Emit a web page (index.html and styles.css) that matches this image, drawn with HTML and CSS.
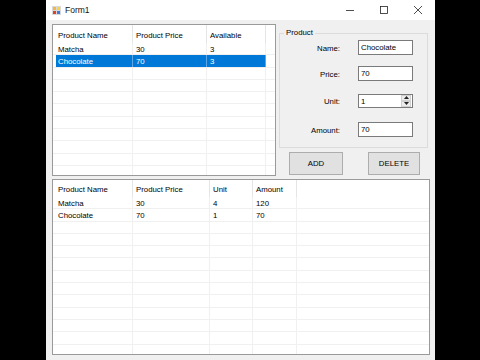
FILE: index.html
```html
<!DOCTYPE html>
<html>
<head>
<meta charset="utf-8">
<link rel="stylesheet" href="styles.css">
</head>
<body>
<div class="window">
  <div class="titlebar">
    <svg class="appicon" width="9" height="9" viewBox="0 0 9 9">
      <rect x="0" y="0" width="9" height="9" fill="#d9d9d9"/>
      <rect x="1" y="1" width="3" height="3" fill="#f4b63f"/>
      <rect x="5" y="1" width="3" height="3" fill="#f6d34a"/>
      <rect x="1" y="5" width="3" height="3" fill="#d9432c"/>
      <rect x="5" y="5" width="3" height="3" fill="#3f7bd8"/>
    </svg>
    <span class="title">Form1</span>
    <div class="controls">
      <div class="ctl"><svg width="10" height="10" viewBox="0 0 10 10"><line x1="1" y1="5.5" x2="9" y2="5.5" stroke="#222" stroke-width="0.8"/></svg></div>
      <div class="ctl"><svg width="10" height="10" viewBox="0 0 10 10"><rect x="1.5" y="1.5" width="7" height="7" fill="none" stroke="#222" stroke-width="0.8"/></svg></div>
      <div class="ctl"><svg width="10" height="10" viewBox="0 0 10 10"><path d="M1 1 L9 9 M9 1 L1 9" stroke="#222" stroke-width="0.8"/></svg></div>
    </div>
  </div>
  <div class="client">
    <div class="toprow">
      <div class="list list-top">
        <div class="row head cols-top">
          <div class="cell first">Product Name</div><div class="cell">Product Price</div><div class="cell">Available</div><div class="cell fill"></div>
        </div>
        <div class="row cols-top">
          <div class="cell first">Matcha</div><div class="cell">30</div><div class="cell">3</div><div class="cell fill"></div>
        </div>
        <div class="row cols-top sel">
          <div class="cell first">Chocolate</div><div class="cell">70</div><div class="cell">3</div><div class="cell fill"></div>
        </div>
        <div class="row cols-top"><div class="cell first"></div><div class="cell"></div><div class="cell"></div><div class="cell fill"></div></div>
        <div class="row cols-top"><div class="cell first"></div><div class="cell"></div><div class="cell"></div><div class="cell fill"></div></div>
        <div class="row cols-top"><div class="cell first"></div><div class="cell"></div><div class="cell"></div><div class="cell fill"></div></div>
        <div class="row cols-top"><div class="cell first"></div><div class="cell"></div><div class="cell"></div><div class="cell fill"></div></div>
        <div class="row cols-top"><div class="cell first"></div><div class="cell"></div><div class="cell"></div><div class="cell fill"></div></div>
        <div class="row cols-top"><div class="cell first"></div><div class="cell"></div><div class="cell"></div><div class="cell fill"></div></div>
        <div class="row cols-top"><div class="cell first"></div><div class="cell"></div><div class="cell"></div><div class="cell fill"></div></div>
        <div class="row cols-top"><div class="cell first"></div><div class="cell"></div><div class="cell"></div><div class="cell fill"></div></div>
        <div class="row cols-top"><div class="cell first"></div><div class="cell"></div><div class="cell"></div><div class="cell fill"></div></div>
      </div>
      <div class="panel">
        <div class="group">
          <span class="legend">Product</span>
          <div class="field">
            <span class="lbl">Name:</span><div class="box">Chocolate</div>
          </div>
          <div class="field f2">
            <span class="lbl">Price:</span><div class="box">70</div>
          </div>
          <div class="field f3">
            <span class="lbl">Unit:</span>
            <div class="box spinbox">1
              <div class="spin">
                <div class="sbtn"><svg width="5" height="3" viewBox="0 0 5 3"><path d="M0 3 L2.5 0 L5 3 Z" fill="#222"/></svg></div>
                <div class="sbtn"><svg width="5" height="3" viewBox="0 0 5 3"><path d="M0 0 L2.5 3 L5 0 Z" fill="#222"/></svg></div>
              </div>
            </div>
          </div>
          <div class="field f4">
            <span class="lbl">Amount:</span><div class="box">70</div>
          </div>
        </div>
        <div class="buttons">
          <div class="btn btn-add">ADD</div>
          <div class="btn btn-del">DELETE</div>
        </div>
      </div>
    </div>
    <div class="list list-bottom">
      <div class="row head cols-bot">
        <div class="cell first">Product Name</div><div class="cell">Product Price</div><div class="cell">Unit</div><div class="cell">Amount</div><div class="cell fill"></div>
      </div>
      <div class="row cols-bot">
        <div class="cell first">Matcha</div><div class="cell">30</div><div class="cell">4</div><div class="cell">120</div><div class="cell fill"></div>
      </div>
      <div class="row cols-bot">
        <div class="cell first">Chocolate</div><div class="cell">70</div><div class="cell">1</div><div class="cell">70</div><div class="cell fill"></div>
      </div>
      <div class="row cols-bot"><div class="cell first"></div><div class="cell"></div><div class="cell"></div><div class="cell"></div><div class="cell fill"></div></div>
      <div class="row cols-bot"><div class="cell first"></div><div class="cell"></div><div class="cell"></div><div class="cell"></div><div class="cell fill"></div></div>
      <div class="row cols-bot"><div class="cell first"></div><div class="cell"></div><div class="cell"></div><div class="cell"></div><div class="cell fill"></div></div>
      <div class="row cols-bot"><div class="cell first"></div><div class="cell"></div><div class="cell"></div><div class="cell"></div><div class="cell fill"></div></div>
      <div class="row cols-bot"><div class="cell first"></div><div class="cell"></div><div class="cell"></div><div class="cell"></div><div class="cell fill"></div></div>
      <div class="row cols-bot"><div class="cell first"></div><div class="cell"></div><div class="cell"></div><div class="cell"></div><div class="cell fill"></div></div>
      <div class="row cols-bot"><div class="cell first"></div><div class="cell"></div><div class="cell"></div><div class="cell"></div><div class="cell fill"></div></div>
      <div class="row cols-bot"><div class="cell first"></div><div class="cell"></div><div class="cell"></div><div class="cell"></div><div class="cell fill"></div></div>
      <div class="row cols-bot"><div class="cell first"></div><div class="cell"></div><div class="cell"></div><div class="cell"></div><div class="cell fill"></div></div>
      <div class="row cols-bot"><div class="cell first"></div><div class="cell"></div><div class="cell"></div><div class="cell"></div><div class="cell fill"></div></div>
      <div class="row cols-bot"><div class="cell first"></div><div class="cell"></div><div class="cell"></div><div class="cell"></div><div class="cell fill"></div></div>
      <div class="row cols-bot"><div class="cell first"></div><div class="cell"></div><div class="cell"></div><div class="cell"></div><div class="cell fill"></div></div>
    </div>
  </div>
</div>
</body>
</html>
```

FILE: styles.css
```css
html, body {
  margin: 0;
  padding: 0;
  background: #000;
  width: 480px;
  height: 360px;
  overflow: hidden;
  font-family: "Liberation Sans", Arial, sans-serif;
  font-size: 7.8px;
  color: #000;
}

.window {
  width: 389px;
  height: 360px;
  margin-left: 46px;
  background: #f0f0f0;
  display: flex;
  flex-direction: column;
}

.titlebar {
  height: 20px;
  background: #fff;
  display: flex;
  align-items: center;
  padding-left: 6px;
  flex-shrink: 0;
}

.appicon {
  display: block;
}

.title {
  margin-left: 4px;
  font-size: 8.5px;
  color: #111;
}

.controls {
  margin-left: auto;
  display: flex;
  height: 20px;
}

.ctl {
  width: 34px;
  height: 20px;
  display: flex;
  align-items: center;
  justify-content: center;
}

.ctl svg {
  display: block;
}

.client {
  flex: 1;
  padding: 4px 0 0 6px;
  display: flex;
  flex-direction: column;
}

.toprow {
  display: flex;
  height: 152px;
  flex-shrink: 0;
}

.list {
  box-sizing: border-box;
  background: #fff;
  border: 1px solid #9a9a9a;
  overflow: hidden;
}

.list-top {
  width: 224px;
  height: 152px;
}

.list-bottom {
  width: 378px;
  height: 176px;
  margin-top: 3px;
}

.row {
  display: grid;
  box-sizing: border-box;
  height: 12.3px;
  line-height: 13.6px;
  border-bottom: 1px solid #f0f0f0;
  white-space: nowrap;
}

.row.head {
  height: 18px;
  line-height: 21px;
  border-bottom: none;
}

.list-bottom .row.head {
  height: 17px;
  line-height: 20px;
}

.cols-top {
  grid-template-columns: 80px 74px 59px 1fr;
}

.cols-bot {
  grid-template-columns: 80px 77px 43px 44px 1fr;
}

.cell {
  border-right: 1px solid #f0f0f0;
  padding-left: 3px;
  overflow: hidden;
}

.cell.first {
  padding-left: 5px;
}

.cell.fill {
  border-right: none;
}

.head .cell {
  border-right-color: #e5e5e5;
}

.head .cell.fill {
  border-right: none;
}

.sel .cell {
  background: #0078d7;
  color: #fff;
  border-right-color: #5aa6e6;
}

.sel .cell.first {
  background: linear-gradient(to right, #fff 3px, #0078d7 3px);
}

.sel .cell.fill {
  background: #fff;
}

.panel {
  width: 149px;
  margin-left: 3px;
  display: flex;
  flex-direction: column;
}

.group {
  position: relative;
  box-sizing: border-box;
  margin-top: 9px;
  height: 115px;
  border: 1px solid #dcdcdc;
  padding-top: 6px;
}

.legend {
  position: absolute;
  top: -6px;
  left: 4px;
  padding: 0 2px;
  background: #f0f0f0;
  line-height: 10px;
}

.field {
  display: flex;
  align-items: center;
  height: 15px;
}

.f2 { margin-top: 11px; }
.f3 { margin-top: 12px; }
.f4 { margin-top: 14px; }

.lbl {
  width: 60px;
  text-align: right;
  margin-right: 18px;
  padding-top: 2px;
}

.box {
  box-sizing: border-box;
  width: 55px;
  height: 15px;
  border: 1px solid #7a7a7a;
  background: #fff;
  padding-left: 2px;
  line-height: 14px;
  position: relative;
}

.spinbox {
  height: 14px;
  line-height: 13px;
}

.spin {
  position: absolute;
  top: 0;
  right: 1px;
  width: 10px;
  height: 12px;
  display: flex;
  flex-direction: column;
}

.sbtn {
  flex: 1;
  background: #ececec;
  border: 1px solid #d0d0d0;
  box-sizing: border-box;
  display: flex;
  align-items: center;
  justify-content: center;
}

.sbtn svg {
  display: block;
}

.buttons {
  display: flex;
  margin-top: 4px;
  padding-left: 10px;
}

.btn {
  box-sizing: border-box;
  height: 23px;
  background: #e1e1e1;
  border: 1px solid #adadad;
  display: flex;
  align-items: center;
  justify-content: center;
}

.btn-add {
  width: 54px;
}

.btn-del {
  width: 52px;
  margin-left: 25px;
}
```
